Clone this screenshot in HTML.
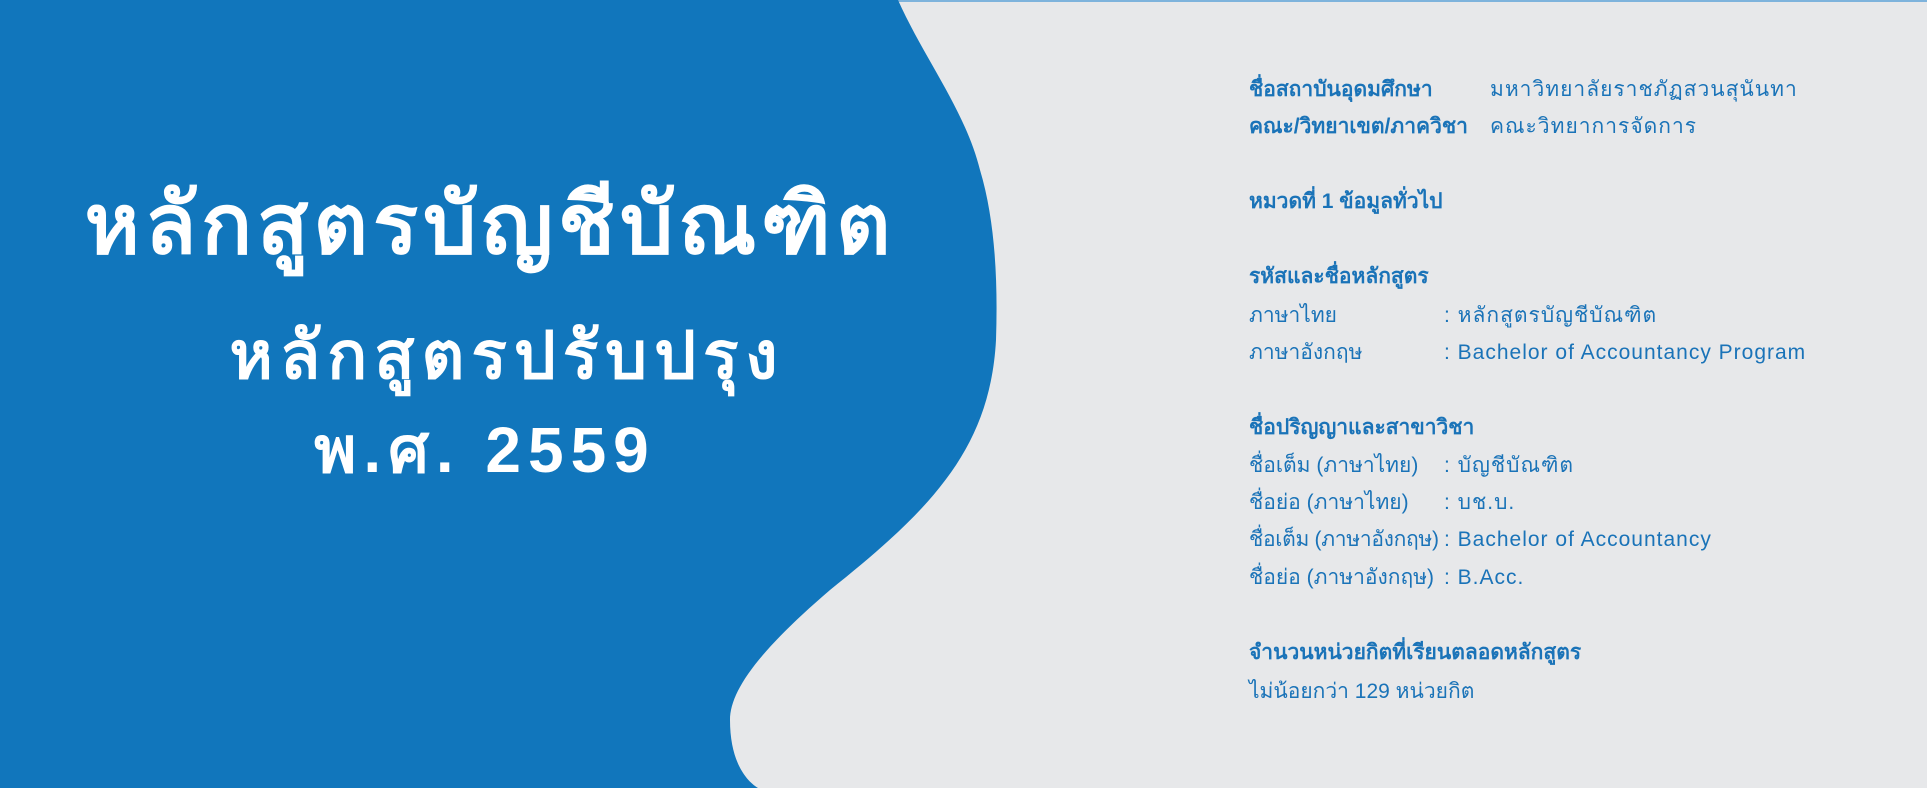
<!DOCTYPE html>
<html><head><meta charset="utf-8">
<style>
html,body{margin:0;padding:0}
body{width:1927px;height:788px;overflow:hidden;background:#e7e8ea;position:relative;font-family:"Liberation Sans","Noto Sans CJK SC",sans-serif;color:#1a73b8}
svg{position:absolute;left:0;top:0}
.t{position:absolute;white-space:nowrap;line-height:1}
.w{color:#fff;font-weight:bold}
.r{font-size:21px;line-height:28px;height:28px}
.v{letter-spacing:1px}
.b{font-weight:bold}
</style></head><body>
<svg width="1927" height="788" viewBox="0 0 1927 788">
<rect x="0" y="0" width="1927" height="2" fill="#7eb3dc"/>
<path d="M0 0 L898 0 C925 60 965 110 980 170 C995 220 998 280 996 340 C990 450 930 510 830 590 C760 650 730 690 730 720 C730 760 745 780 758 788 L0 788 Z" fill="#1176bc"/>
</svg>
<div class="t w" style="left:40px;top:182px;font-size:84px;width:900px;text-align:center;letter-spacing:5px">หลักสูตรบัญชีบัณฑิต</div>
<div class="t w" style="left:207px;top:322px;font-size:66px;width:600px;text-align:center;letter-spacing:7px">หลักสูตรปรับปรุง</div>
<div class="t w" style="left:285px;top:418px;font-size:64px;width:400px;text-align:center;letter-spacing:7px">พ.ศ. 2559</div>

<div class="t r b" style="left:1249px;top:76px">ชื่อสถาบันอุดมศึกษา</div>
<div class="t r v" style="left:1490px;top:76px">มหาวิทยาลัยราชภัฏสวนสุนันทา</div>
<div class="t r b" style="left:1249px;top:113px">คณะ/วิทยาเขต/ภาควิชา</div>
<div class="t r v" style="left:1490px;top:113px">คณะวิทยาการจัดการ</div>
<div class="t r b" style="left:1249px;top:188px">หมวดที่ 1 ข้อมูลทั่วไป</div>
<div class="t r b" style="left:1249px;top:263px">รหัสและชื่อหลักสูตร</div>
<div class="t r" style="left:1249px;top:302px">ภาษาไทย</div>
<div class="t r v" style="left:1444px;top:302px">: หลักสูตรบัญชีบัณฑิต</div>
<div class="t r" style="left:1249px;top:339px">ภาษาอังกฤษ</div>
<div class="t r v" style="left:1444px;top:339px">: Bachelor of Accountancy Program</div>
<div class="t r b" style="left:1249px;top:414px">ชื่อปริญญาและสาขาวิชา</div>
<div class="t r" style="left:1249px;top:452px">ชื่อเต็ม (ภาษาไทย)</div>
<div class="t r v" style="left:1444px;top:452px">: บัญชีบัณฑิต</div>
<div class="t r" style="left:1249px;top:489px">ชื่อย่อ (ภาษาไทย)</div>
<div class="t r v" style="left:1444px;top:489px">: บช.บ.</div>
<div class="t r" style="left:1249px;top:526px;letter-spacing:-0.3px">ชื่อเต็ม (ภาษาอังกฤษ)</div>
<div class="t r v" style="left:1444px;top:526px">: Bachelor of Accountancy</div>
<div class="t r" style="left:1249px;top:564px">ชื่อย่อ (ภาษาอังกฤษ)</div>
<div class="t r v" style="left:1444px;top:564px">: B.Acc.</div>
<div class="t r b" style="left:1249px;top:639px">จำนวนหน่วยกิตที่เรียนตลอดหลักสูตร</div>
<div class="t r" style="left:1249px;top:678px">ไม่น้อยกว่า 129 หน่วยกิต</div>
</body></html>
